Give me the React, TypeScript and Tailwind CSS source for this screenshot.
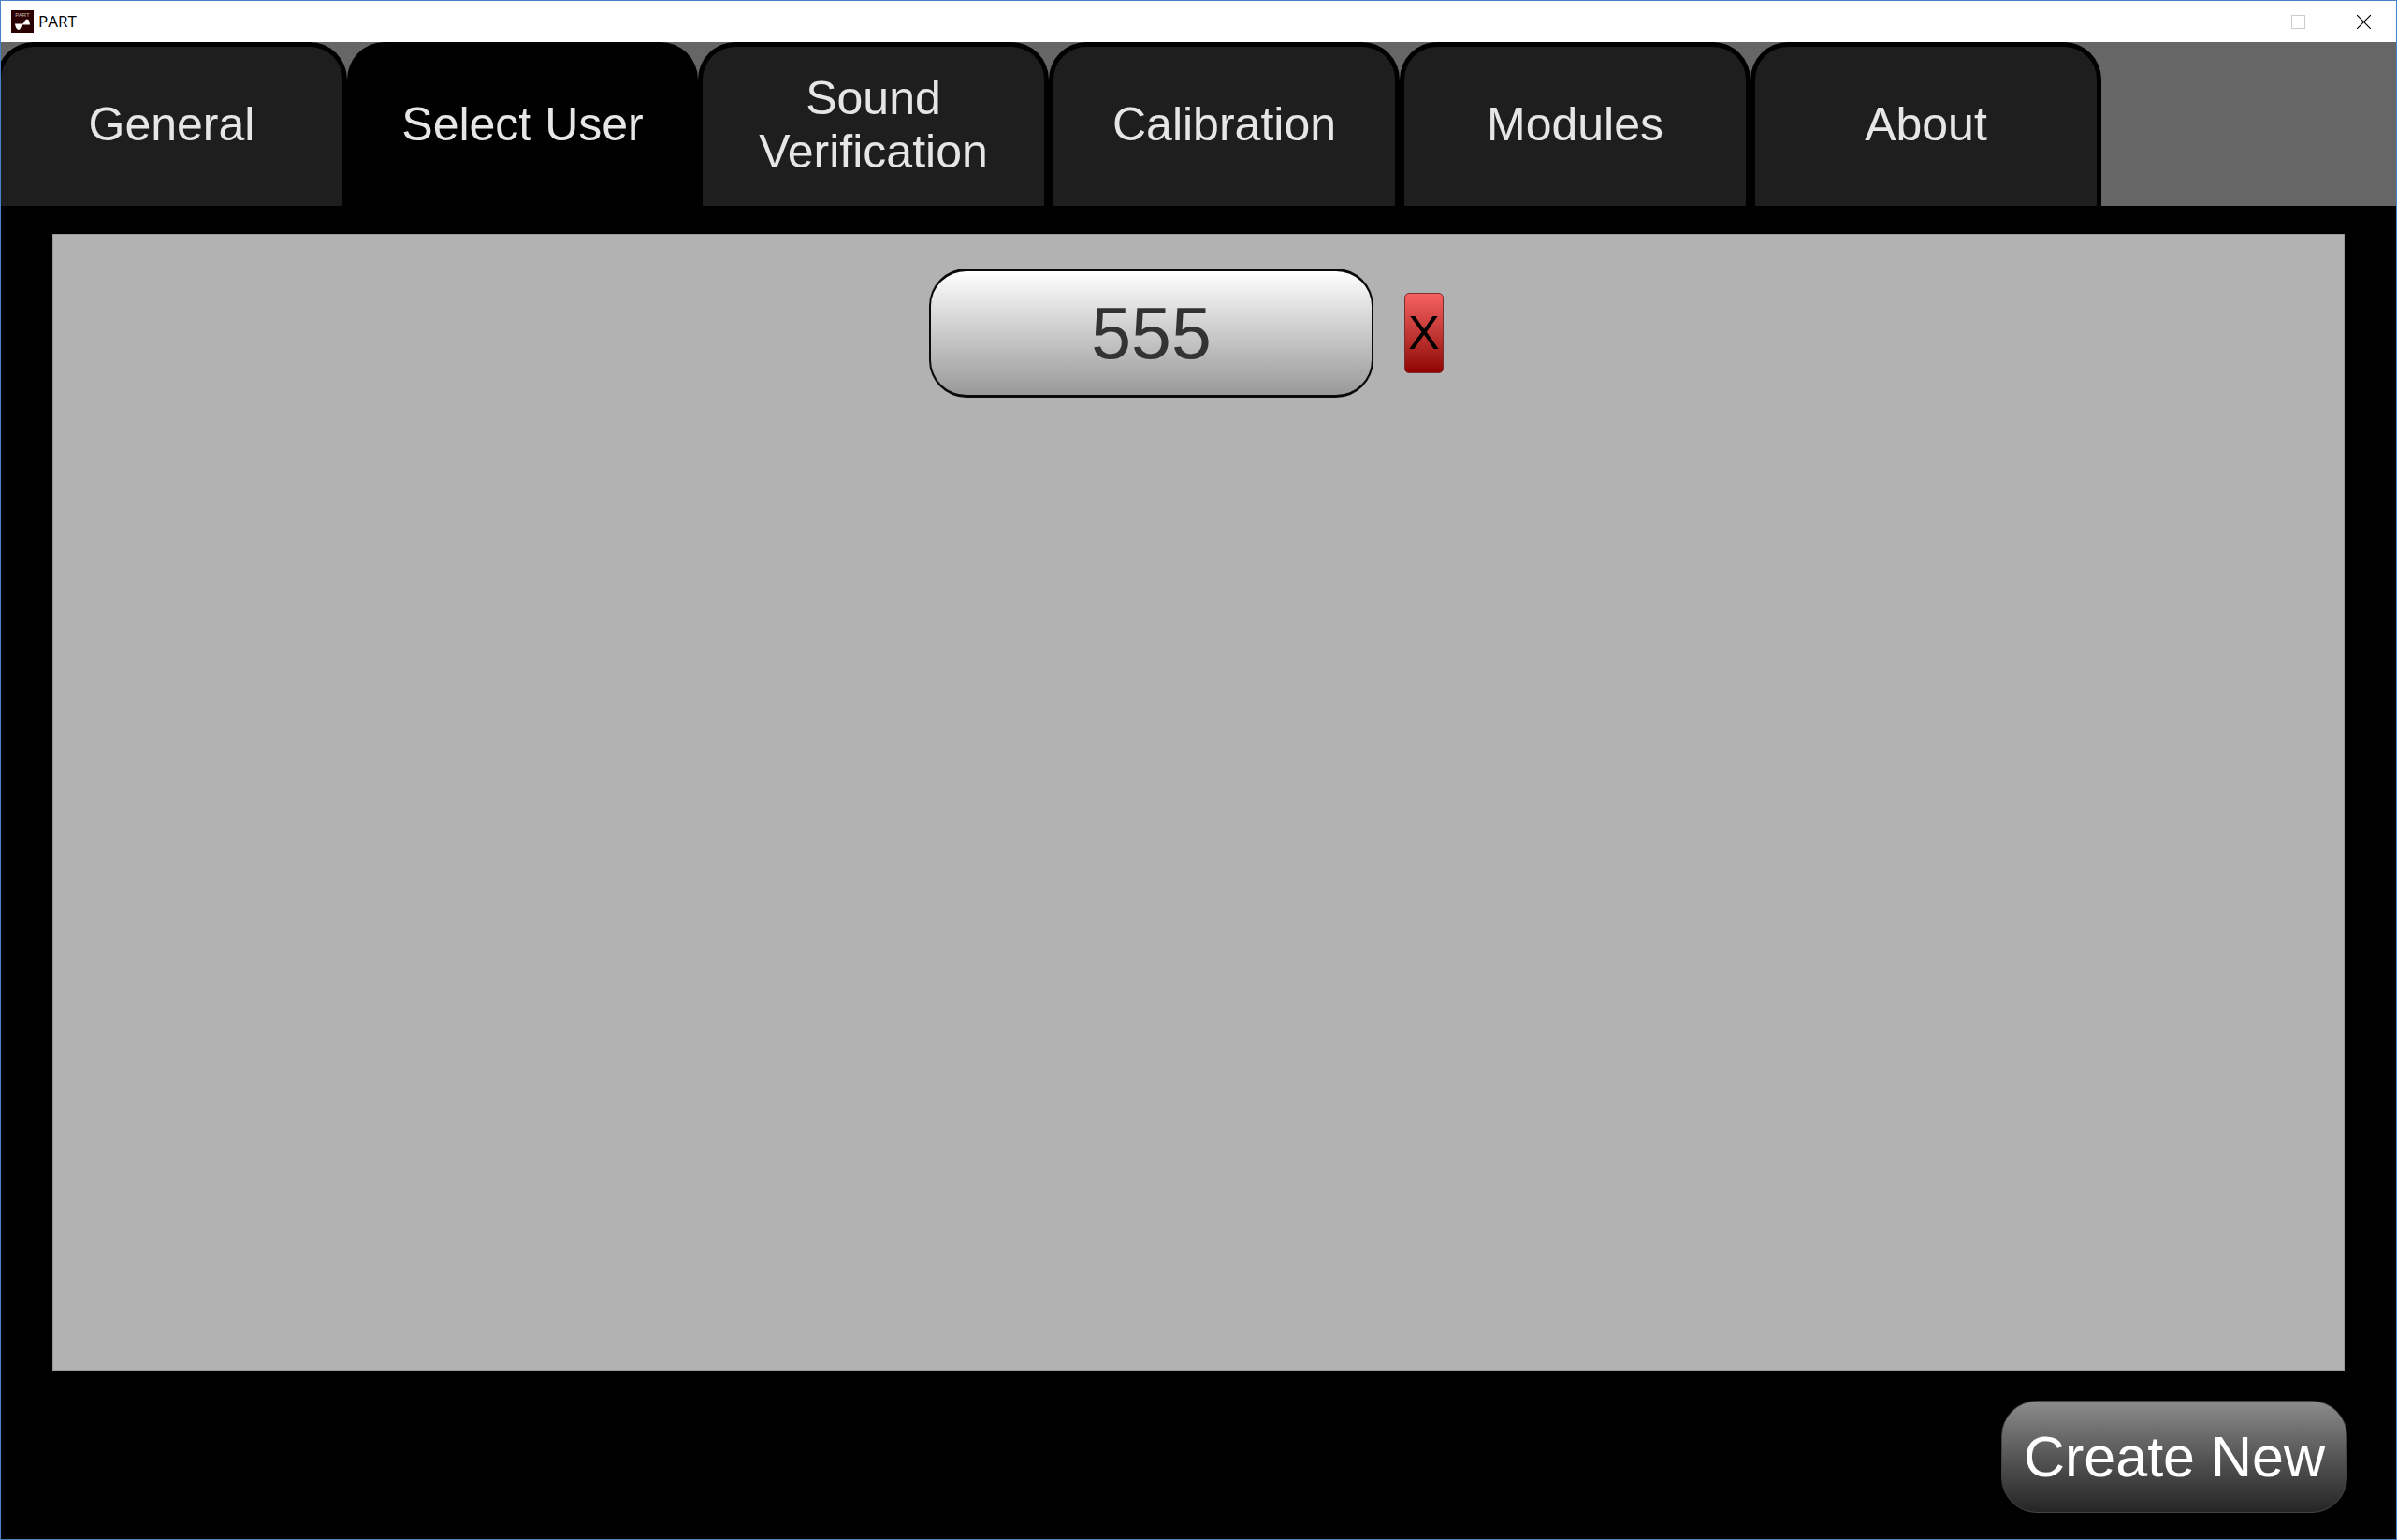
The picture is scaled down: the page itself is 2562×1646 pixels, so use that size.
const tabs = ['General', 'Select User', 'Sound Verification', 'Calibration', 'Modules', 'About'];

function AppIcon() {
  return (
    <svg viewBox="0 0 24 24" className="size-6" aria-hidden="true">
      <rect width="24" height="24" fill="#2b0000" />
      <text x="12" y="6.500" textAnchor="middle" fontSize="6" fill="#c9b8b8">PART</text>
      <path d="M4 14.500h8c1.500 0 2.500-5 5-5 1.800 0 2.800 2.500 3 6h-8c-1 0-2 5.500-4 5.500S4.500 18 4 14.500z" fill="#fff" />
    </svg>
  );
}

function TitleBar() {
  return (
    <header className="flex h-11 items-center justify-between bg-white pl-[11px]">
      <div className="flex items-center gap-[5px]">
        <AppIcon />
        <h1 className="font-['Open_Sans',sans-serif] text-[17px] leading-6 text-black">PART</h1>
      </div>
      <div className="flex h-full">
        <button aria-label="Minimize" className="flex w-[70px] items-center justify-center">
          <svg viewBox="0 0 15 15" className="size-[15px]" shapeRendering="crispEdges"><path d="M0 7.500h15" stroke="#000" /></svg>
        </button>
        <button aria-label="Maximize" disabled className="flex w-[70px] items-center justify-center">
          <svg viewBox="0 0 15 15" className="size-[15px]" shapeRendering="crispEdges"><rect x="0.500" y="0.500" width="14" height="14" fill="none" stroke="#ccc" /></svg>
        </button>
        <button aria-label="Close" className="flex w-[70px] items-center justify-center">
          <svg viewBox="0 0 15 15" className="size-[15px]"><path d="M0 0l15 15M15 0L0 15" stroke="#000" strokeWidth="1.200" /></svg>
        </button>
      </div>
    </header>
  );
}

export default function App() {
  return (
    <div className="flex min-h-screen flex-col border border-[#4a80c8] bg-black font-['Liberation_Sans',Arial,sans-serif]">
      <TitleBar />
      <nav className="overflow-hidden bg-[#666]">
        <div role="tablist" className="-ml-[5px] flex">
          {tabs.map((tab) => (
            <button
              key={tab}
              role="tab"
              aria-selected={tab === 'Select User'}
              className="h-[175px] w-[375px] rounded-t-[40px] border-x-[5px] border-t-[5px] border-black bg-[#1e1e1e] px-10 pb-[3px] text-[50px] leading-[57px] text-[#e6e6e6] aria-selected:bg-black aria-selected:px-6"
            >
              {tab}
            </button>
          ))}
        </div>
      </nav>
      <main className="flex flex-1 flex-col px-[55px] pt-[30px] pb-7">
        <section className="flex-1 border border-[#999] bg-[#b2b2b2] pt-9">
          <div className="flex items-center justify-center gap-[33px] pr-[26px]">
            <button className="h-[138px] w-[475px] rounded-[40px] border-x-2 border-y-[3px] border-[#0a0a0a] bg-linear-to-b from-white to-[#999] text-[77px] leading-[88px] text-[#333]">555</button>
            <button aria-label="Delete user 555" className="flex h-[86px] w-[42px] items-center justify-center rounded-[5px] border border-[#7a3030] bg-linear-to-b from-[#f56060] to-[#900000] text-[50px] leading-[57px] text-black">X</button>
          </div>
        </section>
        <button className="mt-8 -mr-[3px] h-[120px] w-[370px] self-end rounded-[38px] border border-[#444] bg-linear-to-b from-[#8c8c8c] to-[#262626] text-[61px] leading-[68px] text-white">Create New</button>
      </main>
    </div>
  );
}
